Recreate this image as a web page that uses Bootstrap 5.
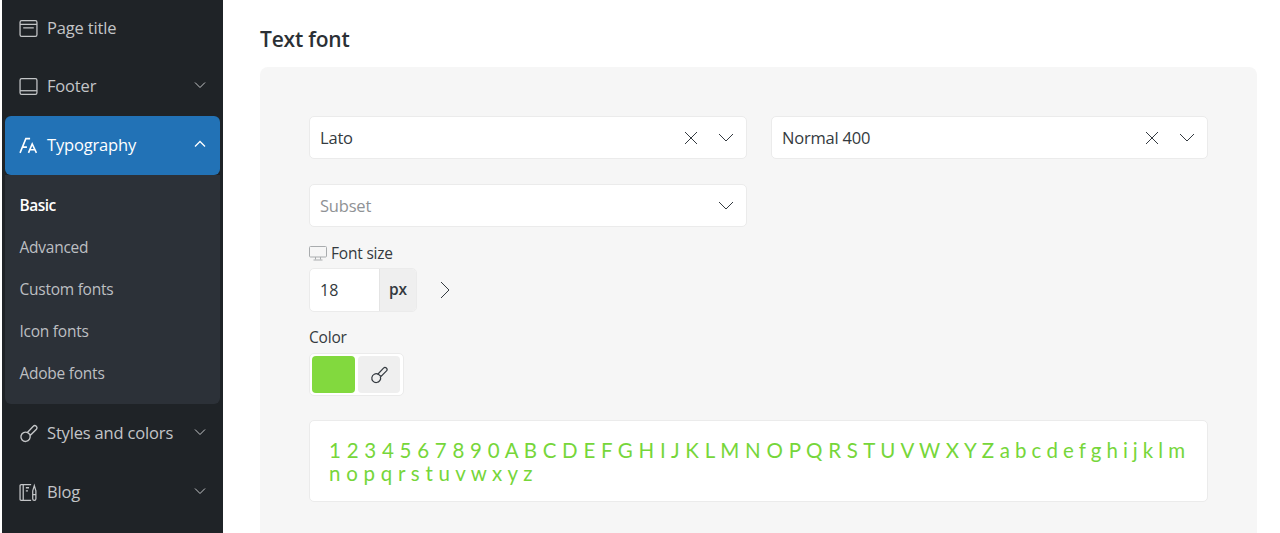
<!DOCTYPE html>
<html lang="en">
<head>
<meta charset="UTF-8">
<title>Typography</title>
<link href="https://cdn.jsdelivr.net/npm/bootstrap@5.3.0/dist/css/bootstrap.min.css" rel="stylesheet">
<style>
body { font-family: "Open Sans", "Noto Sans", sans-serif; font-size: 16px; color: #343a40; height: 533px; overflow: hidden; background: #fff; }
.shell { height: 533px; padding-left: 2px; }
.side { width: 221px; background: #1f2327; padding: 0 3px; flex: none; }
.side-link { height: 59px; padding: 0 15px 0 14px; color: #c3c5c7; font-size: 16.5px; letter-spacing: -.17px; }
.side-link svg.ico { width: 19px; height: 19px; margin-right: 9px; flex: none; }
.side-link svg.chev { width: 12px; height: 12px; margin-left: auto; margin-right: -1px; margin-top: -3px; }
.side-top { height: 57px; }
.side-active { background: #2272b6; color: #fff; border-radius: 6px; }
.side-sub { background: #2c3138; border-radius: 0 0 6px 6px; padding: 9.400px 15px 10px 14.500px; height: 229px; }
.side-sub div { height: 41.8px; line-height: 42px; color: #bdbfc2; font-size: 15.5px; letter-spacing: -.25px; }
.side-sub .on { color: #fff; font-weight: 600; letter-spacing: -.5px; }
.main-area { padding: 25px 23px 0 37px; }
.sec-title { font-size: 21px; font-weight: 600; color: #2b3035; margin: 0 0 14px; line-height: 28px; letter-spacing: -.2px; }
.panel { background: #f6f6f6; border-radius: 8px 8px 0 0; padding: 49px 49px 0; height: 470px; }
.pick { height: 43px; background: #fff; border: 1px solid #ebebeb; border-radius: 5px; padding: 1px 12px 0 10px; width: 438px; font-size: 16.5px; letter-spacing: -.2px; }
.pick-b { width: 437px; }
.pick-c { margin-top: 25px; }
.pick svg { flex: none; }
.pick .x { margin-left: auto; margin-right: 20px; }
.ph { color: #8f9295; }
.size-lbl { font-size: 15.5px; margin-top: 14px; height: 27px; padding-bottom: 2px; letter-spacing: -.2px; }
.size-box { width: 108px; height: 44px; background: #fff; border: 1px solid #ebebeb; border-radius: 5px; overflow: hidden; }
.size-val { width: 69px; padding-left: 10px; }
.size-unit { flex: 1; background: #efefef; border-left: 1px solid #e4e4e4; font-weight: 600; font-size: 15.5px; }
.arrow-next { margin-left: 23px; }
.clr-lbl { font-size: 15.5px; margin-top: 13px; height: 25px; line-height: 25px; letter-spacing: -.2px; }
.clr-box { width: 95px; height: 43px; background: #fff; border: 1px solid #ebebeb; border-radius: 5px; padding: 2px; gap: 3px; margin-top: 3px; }
.clr-swatch { width: 43px; background: #82d93e; border-radius: 4px; }
.clr-btn { width: 42px; background: #efefef; border-radius: 4px; }
.preview { margin-top: 24px; width: 899px; height: 82px; background: #fff; border: 1px solid #ebebeb; border-radius: 5px; padding: 18px 19px 0; font-family: Lato, sans-serif; font-size: 20.5px; line-height: 23px; color: #76d63a; letter-spacing: .25px; }
.lower-run { letter-spacing: -.1px; }
</style>
</head>
<body>
<div class="shell d-flex">
  <nav class="side">
    <div class="side-link side-top d-flex align-items-center">
      <svg class="ico" viewBox="0 0 18 18" fill="none" stroke="currentColor" stroke-width="1.2"><rect x="1" y="1.5" width="16" height="15" rx="1.5"/><path d="M1 5h16M4 8.5h10"/></svg>Page title
    </div>
    <div class="side-link d-flex align-items-center">
      <svg class="ico" viewBox="0 0 18 18" fill="none" stroke="currentColor" stroke-width="1.2"><rect x="1" y="1.5" width="16" height="15" rx="1.5"/><path d="M1 13h16"/></svg>Footer
      <svg class="chev" viewBox="0 0 12 12" fill="none" stroke="currentColor"><path d="M1 3.500l5 5 5-5"/></svg>
    </div>
    <div class="side-link side-active d-flex align-items-center">
      <svg class="ico" viewBox="0 0 18 18" fill="none" stroke="currentColor" stroke-width="1.500"><path d="M1 16L6.500 2.500h4M3 10.500h4.500M9 16l3.500-8.500L16.500 16M10.500 13h4.500"/></svg>Typography
      <svg class="chev" viewBox="0 0 12 12" fill="none" stroke="currentColor" stroke-width="1.300"><path d="M1 8.500l5-5 5 5"/></svg>
    </div>
    <div class="side-sub">
      <div class="on">Basic</div>
      <div>Advanced</div>
      <div>Custom fonts</div>
      <div>Icon fonts</div>
      <div>Adobe fonts</div>
    </div>
    <div class="side-link d-flex align-items-center">
      <svg class="ico" viewBox="0 0 18 18" fill="none" stroke="currentColor" stroke-width="1.300"><path d="M13.500 2.200a2 2 0 0 1 3 2.700L11 10.500 8 8z"/><path d="M8.200 8.200A4.400 4.400 0 1 0 10.300 10.500"/></svg>Styles and colors
      <svg class="chev" viewBox="0 0 12 12" fill="none" stroke="currentColor"><path d="M1 3.500l5 5 5-5"/></svg>
    </div>
    <div class="side-link d-flex align-items-center">
      <svg class="ico" viewBox="0 0 18 18" fill="none" stroke="currentColor" stroke-width="1.2"><path d="M11.500 16.500H2a1 1 0 0 1-1-1v-13a1 1 0 0 1 1-1h9.500M4 1.500v15M6.500 4.500h3M6.500 7.500h2"/><path d="M13 7.500l1.500-5 1.500 5v7.500a1.500 1.500 0 0 1-3 0zM13 11h3"/></svg>Blog
      <svg class="chev" viewBox="0 0 12 12" fill="none" stroke="currentColor"><path d="M1 3.500l5 5 5-5"/></svg>
    </div>
  </nav>
  <main class="main-area flex-grow-1">
    <h2 class="sec-title">Text font</h2>
    <div class="panel">
      <div class="d-flex gap-4">
        <div class="pick d-flex align-items-center">Lato
          <svg class="x" width="14" height="14" viewBox="0 0 14 14" stroke="#343a40" fill="none"><path d="M1 1l12 12M13 1L1 13"/></svg>
          <svg width="16" height="10" viewBox="0 0 16 10" stroke="#343a40" fill="none"><path d="M1 1l7 7 7-7"/></svg>
        </div>
        <div class="pick pick-b d-flex align-items-center">Normal 400
          <svg class="x" width="14" height="14" viewBox="0 0 14 14" stroke="#343a40" fill="none"><path d="M1 1l12 12M13 1L1 13"/></svg>
          <svg width="16" height="10" viewBox="0 0 16 10" stroke="#343a40" fill="none"><path d="M1 1l7 7 7-7"/></svg>
        </div>
      </div>
      <div class="pick pick-c d-flex align-items-center"><span class="ph">Subset</span>
        <svg class="ms-auto" width="16" height="10" viewBox="0 0 16 10" stroke="#343a40" fill="none"><path d="M1 1l7 7 7-7"/></svg>
      </div>
      <div class="size-lbl d-flex align-items-center">
        <svg class="me-1" width="18" height="15" viewBox="0 0 18 15" stroke="#a9acae" fill="none"><rect x=".5" y=".5" width="17" height="10.500" rx="1"/><path d="M6.500 11v2.500M11.500 11v2.500M4.500 14h9"/></svg>Font size
      </div>
      <div class="d-flex align-items-center">
        <div class="size-box d-flex">
          <div class="size-val d-flex align-items-center">18</div>
          <div class="size-unit d-flex align-items-center justify-content-center">px</div>
        </div>
        <svg class="arrow-next" width="10" height="18" viewBox="0 0 10 18" stroke="#343a40" fill="none"><path d="M1 1l8 8-8 8"/></svg>
      </div>
      <div class="clr-lbl">Color</div>
      <div class="clr-box d-flex">
        <div class="clr-swatch"></div>
        <div class="clr-btn d-flex align-items-center justify-content-center">
          <svg width="18" height="18" viewBox="0 0 18 18" fill="none" stroke="#343a40" stroke-width="1.200"><path d="M13.500 2.200a2 2 0 0 1 3 2.700L11 10.500 8 8z"/><path d="M8.200 8.200A4.400 4.400 0 1 0 10.300 10.500"/></svg>
        </div>
      </div>
      <div class="preview">1 2 3 4 5 6 7 8 9 0 A B C D E F G H I J K L M N O P Q R S T U V W X Y Z <span class="lower-run">a b c d e f g h i j k l m</span> n o p q r s t u v w x y z</div>
    </div>
  </main>
</div>
<script src="https://cdn.jsdelivr.net/npm/bootstrap@5.3.0/dist/js/bootstrap.bundle.min.js"></script>
</body>
</html>
